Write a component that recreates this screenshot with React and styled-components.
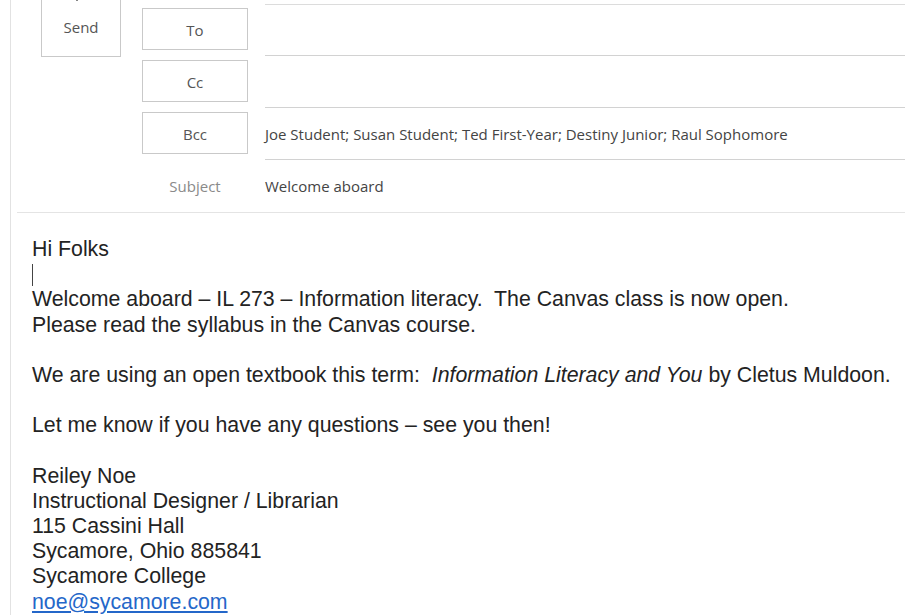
import React from "react";
import styled, { createGlobalStyle } from "styled-components";

const Global = createGlobalStyle`
  html, body { margin: 0; padding: 0; background: #fff; overflow: hidden; }
  #root { width: 905px; height: 615px; overflow: hidden; }
`;

const Frame = styled.div`
  margin-left: 10px;
  height: 615px;
  border-left: 1px solid #e2e2e2;
  overflow: hidden;
`;

const Header = styled.div`
  display: flex;
  margin-top: -26px;
  font-family: "Open Sans", "Noto Sans", sans-serif;
  font-size: 15px;
`;

const SendCol = styled.div`
  padding-left: 30px;
  width: 79px;
  flex: none;
`;

const SendButton = styled.div`
  box-sizing: border-box;
  width: 80px;
  height: 83px;
  border: 1px solid #c9c9c9;
  display: flex;
  flex-direction: column;
  align-items: center;
  padding-top: 7px;
  gap: 15px;
  color: #555;
  font-size: 15px;
`;

const IconWrap = styled.div`
  margin-right: 6px;
  height: 20px;
`;

const Fields = styled.div`
  flex: 1;
  margin-left: 22px;
  margin-top: 30px;
`;

const Row = styled.div`
  display: grid;
  grid-template-columns: 106px 1fr;
  column-gap: 17px;
  height: 52px;
`;

const LabelButton = styled.div`
  box-sizing: border-box;
  margin-top: 4px;
  height: 42px;
  border: 1px solid #c9c9c9;
  display: flex;
  align-items: center;
  justify-content: center;
  color: #555;
  font-size: 15px;
  padding-top: 1px;
`;

const PlainLabel = styled.div`
  display: flex;
  align-items: center;
  justify-content: center;
  color: #8a8a8a;
  font-size: 15px;
`;

const Field = styled.div`
  display: flex;
  align-items: center;
  border-bottom: ${(p) => (p.$noLine ? "none" : "1px solid #d2d2d2")};
  border-top: ${(p) => (p.$top ? "1px solid #dcdcdc" : "none")};
  color: #444;
  white-space: nowrap;
`;

const Divider = styled.div`
  margin-left: 6px;
  height: 1px;
  background: #e4e4e4;
`;

const Body = styled.div`
  padding: 24px 0 0 21px;
  font-family: "Liberation Sans", Arial, sans-serif;
  font-size: 21.3px;
  line-height: 25.2px;
  color: #232323;
  white-space: pre;
`;

const Line = styled.div`
  height: 25.2px;
  display: flex;
  align-items: center;
`;

const Cursor = styled.span`
  display: inline-block;
  width: 1px;
  height: 22px;
  background: #444;
`;

const Link = styled.a`
  color: #2467c9;
  text-decoration: underline;
`;

function PlaneIcon() {
  return (
    <svg width="22" height="20" viewBox="0 0 22 20" fill="none" stroke="#444" strokeWidth="1.3">
      <path d="M1 9 L20 1 L15 15 L10 11 Z" />
      <path d="M10 11 L20 1" />
      <path d="M10 11 L10 19" />
    </svg>
  );
}

export default function App() {
  const fieldRows = [
    { label: "To", value: "", top: true },
    { label: "Cc", value: "" },
    { label: "Bcc", value: "Joe Student; Susan Student; Ted First-Year; Destiny Junior; Raul Sophomore" },
  ];
  return (
    <>
      <Global />
      <Frame>
        <Header>
          <SendCol>
            <SendButton>
              <IconWrap><PlaneIcon /></IconWrap>
              <span>Send</span>
            </SendButton>
          </SendCol>
          <Fields>
            {fieldRows.map((r) => (
              <Row key={r.label}>
                <LabelButton>{r.label}</LabelButton>
                <Field $top={r.top}>{r.value}</Field>
              </Row>
            ))}
            <Row>
              <PlainLabel>Subject</PlainLabel>
              <Field $noLine>Welcome aboard</Field>
            </Row>
          </Fields>
        </Header>
        <Divider />
        <Body>
          <Line>Hi Folks</Line>
          <Line><Cursor /></Line>
          <Line>Welcome aboard – IL 273 – Information literacy.  The Canvas class is now open.</Line>
          <Line>Please read the syllabus in the Canvas course.</Line>
          <Line />
          <Line>We are using an open textbook this term:  <i>Information Literacy and You</i> by Cletus Muldoon.</Line>
          <Line />
          <Line>Let me know if you have any questions – see you then!</Line>
          <Line />
          <Line>Reiley Noe</Line>
          <Line>Instructional Designer / Librarian</Line>
          <Line>115 Cassini Hall</Line>
          <Line>Sycamore, Ohio 885841</Line>
          <Line>Sycamore College</Line>
          <Line><Link href="#">noe@sycamore.com</Link></Line>
        </Body>
      </Frame>
    </>
  );
}
